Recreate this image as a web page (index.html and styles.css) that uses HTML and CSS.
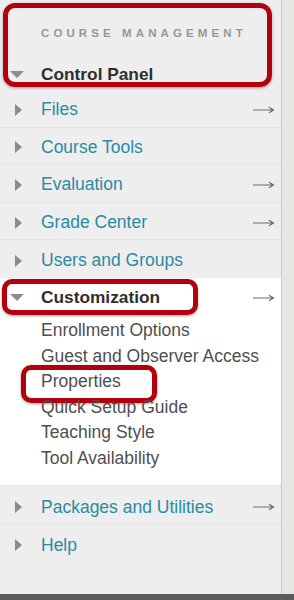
FILE: index.html
```html
<!DOCTYPE html>
<html lang="en">

<head>
    <meta charset="UTF-8">
    <meta name="viewport" content="width=device-width, initial-scale=1.0">
    <title>Control Panel</title>
    <link rel="stylesheet" href="styles.css">
</head>

<body>
    <div class="page">
        <div class="panel">
            <!-- Header with annotation box -->
            <div class="panel-head">
                <div class="head-title">COURSE MANAGEMENT</div>
                <div class="head-row">
                    <span class="tri-down"></span>
                    <span class="head-label">Control Panel</span>
                </div>
                <div class="mark mark-head"></div>
            </div>

            <ul class="menu">
                <li class="menu-item">
                    <span class="tri-right"></span><a href="#">Files</a>
                    <svg class="arrow" viewBox="0 0 22 8"><path d="M0 4H20M16 1.2L20.5 4L16 6.8" /></svg>
                </li>
                <li class="menu-item">
                    <span class="tri-right"></span><a href="#">Course Tools</a>
                </li>
                <li class="menu-item">
                    <span class="tri-right"></span><a href="#">Evaluation</a>
                    <svg class="arrow" viewBox="0 0 22 8"><path d="M0 4H20M16 1.2L20.5 4L16 6.8" /></svg>
                </li>
                <li class="menu-item">
                    <span class="tri-right"></span><a href="#">Grade Center</a>
                    <svg class="arrow" viewBox="0 0 22 8"><path d="M0 4H20M16 1.2L20.5 4L16 6.8" /></svg>
                </li>
                <li class="menu-item last">
                    <span class="tri-right"></span><a href="#">Users and Groups</a>
                </li>
            </ul>

            <!-- Open section -->
            <div class="open-section">
                <div class="open-head">
                    <span class="tri-down"></span>
                    <span class="open-label">Customization</span>
                    <svg class="arrow" viewBox="0 0 22 8"><path d="M0 4H20M16 1.2L20.5 4L16 6.8" /></svg>
                    <div class="mark mark-custom"></div>
                </div>
                <ul class="sub-menu">
                    <li><a href="#">Enrollment Options</a></li>
                    <li><a href="#">Guest and Observer Access</a></li>
                    <li class="props"><a href="#">Properties</a><div class="mark mark-props"></div></li>
                    <li><a href="#">Quick Setup Guide</a></li>
                    <li><a href="#">Teaching Style</a></li>
                    <li><a href="#">Tool Availability</a></li>
                </ul>
            </div>

            <ul class="menu lower">
                <li class="menu-item">
                    <span class="tri-right"></span><a href="#">Packages and Utilities</a>
                    <svg class="arrow" viewBox="0 0 22 8"><path d="M0 4H20M16 1.2L20.5 4L16 6.8" /></svg>
                </li>
                <li class="menu-item last">
                    <span class="tri-right"></span><a href="#">Help</a>
                </li>
            </ul>
        </div>
        <div class="side-strip"></div>
    </div>
    <div class="bottom-bar"></div>
</body>

</html>
```

FILE: styles.css
```css
/* Page base */
body {
    margin: 0;
    background-color: #e6e3de;
    font-family: "Liberation Sans", Arial, sans-serif;
    overflow: hidden;
}

.page {
    display: flex;
    height: 594px;
}

.panel {
    width: 281px;
    background-color: #eeeeee;
    border-right: 1px solid #c9c9c9;
}

.side-strip {
    flex: 1;
    background-color: #e8e6e2;
}

.bottom-bar {
    height: 6px;
    background-color: #5b5b5b;
}

ul {
    list-style: none;
    margin: 0;
    padding: 0;
}

a {
    text-decoration: none;
}

/* Header */
.panel-head {
    position: relative;
    height: 90px;
}

.head-title {
    padding: 27px 0 0 41px;
    font-size: 11.5px;
    font-weight: bold;
    letter-spacing: 4.1px;
    color: #979797;
    line-height: 13px;
}

.head-row {
    display: flex;
    align-items: center;
    height: 24px;
    margin-top: 22px;
}

.head-label,
.open-label {
    font-size: 17.3px;
    font-weight: bold;
    color: #2f2f2f;
}

/* Triangles */
.tri-down {
    width: 0;
    height: 0;
    margin: 0 17px 0 10px;
    border-left: 7px solid transparent;
    border-right: 7px solid transparent;
    border-top: 7px solid #8c8c8c;
}

.tri-right {
    width: 0;
    height: 0;
    margin: 0 19px 0 15px;
    border-top: 6.5px solid transparent;
    border-bottom: 6.5px solid transparent;
    border-left: 7px solid #8a8a8a;
}

/* Main rows */
.menu-item {
    display: flex;
    align-items: center;
    height: 37.6px;
    padding-top: 3px;
    border-bottom: 1px dotted #d6d6d6;
    box-sizing: border-box;
}

.lower .menu-item {
    padding-top: 6px;
}

.menu-item.last {
    border-bottom: none;
}

.menu-item a {
    font-size: 17.5px;
    color: #2b8ba3;
}

.arrow {
    width: 22px;
    height: 8px;
    margin-left: auto;
    margin-right: 6px;
    fill: none;
    stroke: #6a6a6a;
    stroke-width: 1.2;
}

/* Expanded section */
.open-section {
    background-color: #ffffff;
    height: 208px;
    border-bottom: 1px dotted #d0d0d0;
    box-sizing: border-box;
}

.open-head {
    position: relative;
    display: flex;
    align-items: center;
    height: 38px;
    padding-top: 2px;
    box-sizing: border-box;
}

.sub-menu {
    padding: 2px 0 0 41px;
}

.sub-menu li {
    position: relative;
    height: 25.6px;
    line-height: 25.6px;
}

.sub-menu a {
    font-size: 17.5px;
    color: #4f4f4f;
}

/* Red annotation boxes */
.mark {
    position: absolute;
    border: 5px solid #b3000c;
    border-radius: 12px;
    box-shadow: 0 1px 3px rgba(0, 0, 0, 0.35);
}

.mark-head {
    left: 3px;
    top: 3px;
    width: 259px;
    height: 74px;
}

.mark-custom {
    left: 2px;
    top: 1px;
    width: 186px;
    height: 26px;
    border-radius: 10px;
}

.mark-props {
    left: -20px;
    top: -4px;
    width: 126px;
    height: 28px;
    border-radius: 10px;
}
```
